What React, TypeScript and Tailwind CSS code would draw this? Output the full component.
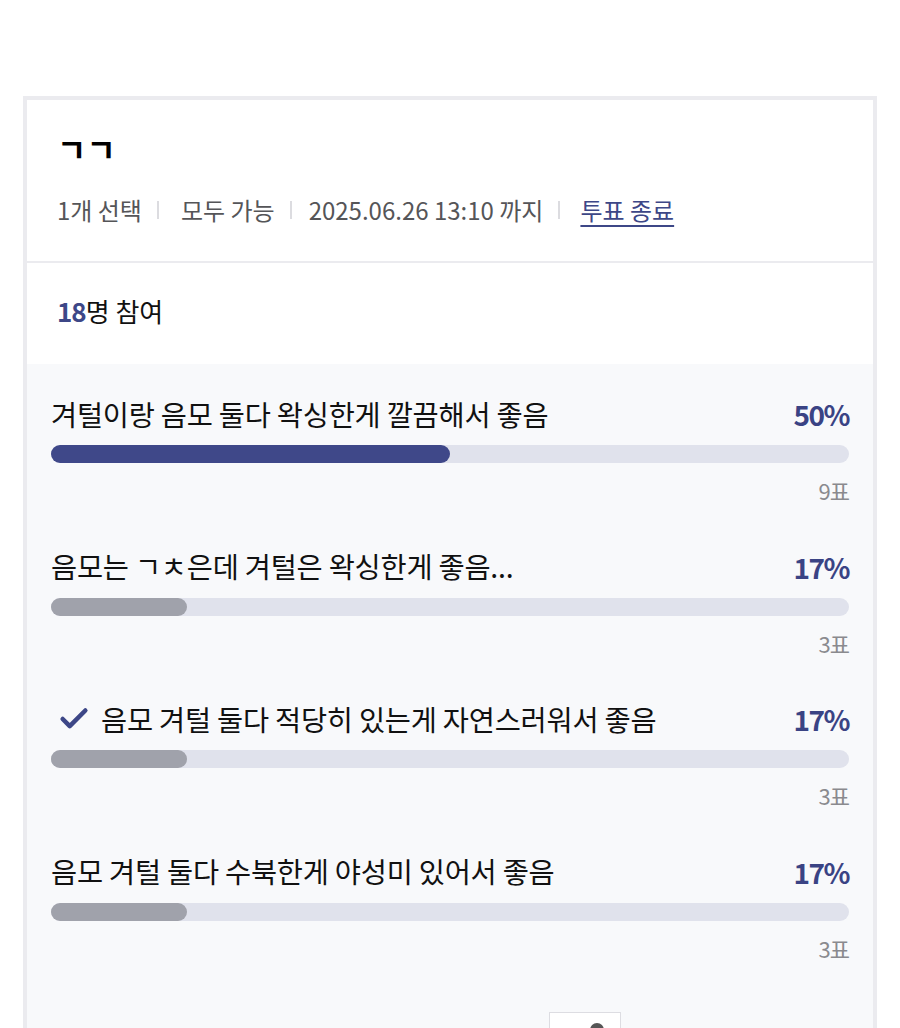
import { Check } from "lucide-react";

const options = [
  { label: "겨털이랑 음모 둘다 왁싱한게 깔끔해서 좋음", pct: 50, votes: 9, mine: false, top: true },
  { label: "음모는 ㄱㅊ은데 겨털은 왁싱한게 좋음...", pct: 17, votes: 3, mine: false, top: false },
  { label: "음모 겨털 둘다 적당히 있는게 자연스러워서 좋음", pct: 17, votes: 3, mine: true, top: false },
  { label: "음모 겨털 둘다 수북한게 야성미 있어서 좋음", pct: 17, votes: 3, mine: false, top: false },
];

function Sep() {
  return <span className="mx-[15px] inline-block h-[18px] w-[2px] bg-[#dcdce0]" />;
}

export default function App() {
  return (
    <div
      className="min-h-[1028px] bg-white pt-[96px] pl-[23px] pr-[23px]"
      style={{ fontFamily: '"Noto Sans CJK KR", "Noto Sans", sans-serif' }}
    >
      <div className="border-4 border-b-0 border-[#ebebef] bg-white">
        <div className="border-b-2 border-[#ebebef] px-[30px] pt-[30px] pb-[35px]">
          <div className="text-[32px] font-bold leading-[36px] text-black">ㄱㄱ</div>
          <div className="mt-[28px] flex items-center text-[24px] leading-[32px] text-[#555558]">
            <span>1개 선택</span>
            <Sep />
            <span className="ml-[7px]">모두 가능</span>
            <Sep />
            <span className="ml-[2px]">2025.06.26 13:10 까지</span>
            <Sep />
            <span className="ml-[5px] text-[#3d4787] underline underline-offset-[5px] decoration-[2px]">
              투표 종료
            </span>
          </div>
        </div>

        <div className="flex h-[101px] items-center px-[30px] pb-[6px] text-[26px] text-[#111]">
          <span className="font-bold tracking-[-1px] text-[#3d4787]">18</span>
          <span>명 참여</span>
        </div>

        <div className="bg-[#f8f9fb] px-[24px] pt-[32px] pb-[52px]">
          <div className="flex flex-col gap-[44.5px]">
            {options.map((o) => (
              <div key={o.label}>
                <div className="flex h-[36px] items-center justify-between">
                  <div className="flex items-center text-[28.4px] tracking-[-0.2px] text-[#111]">
                    {o.mine && (
                      <Check className="mr-[8px] ml-[4px] h-[34px] w-[38px] text-[#3d4787]" strokeWidth={3.2} />
                    )}
                    <span>{o.label}</span>
                  </div>
                  <span className="text-[28px] font-bold tracking-[-1.5px] text-[#3a4384]">{o.pct}%</span>
                </div>
                <div className="mt-[13px] h-[18px] w-full rounded-full bg-[#e0e2ec]">
                  <div
                    className={o.top ? "h-full rounded-full bg-[#3f4889]" : "h-full rounded-full bg-[#a0a2ab]"}
                    style={{ width: o.top ? "50%" : "17%" }}
                  />
                </div>
                <div className="mt-[13px] text-right text-[22px] leading-[28px] tracking-[-1px] text-[#8a8a8e]">
                  {o.votes}표
                </div>
              </div>
            ))}
          </div>
          <div className="mt-[50px] flex">
            <div className="ml-[498px] flex h-[60px] w-[72px] justify-center border border-[#dddde2] bg-white pt-[8px]">
              <span className="ml-[24px] mt-[2px] h-[14px] w-[14px] rounded-full bg-[#555]" />
            </div>
          </div>
        </div>
      </div>
    </div>
  );
}
